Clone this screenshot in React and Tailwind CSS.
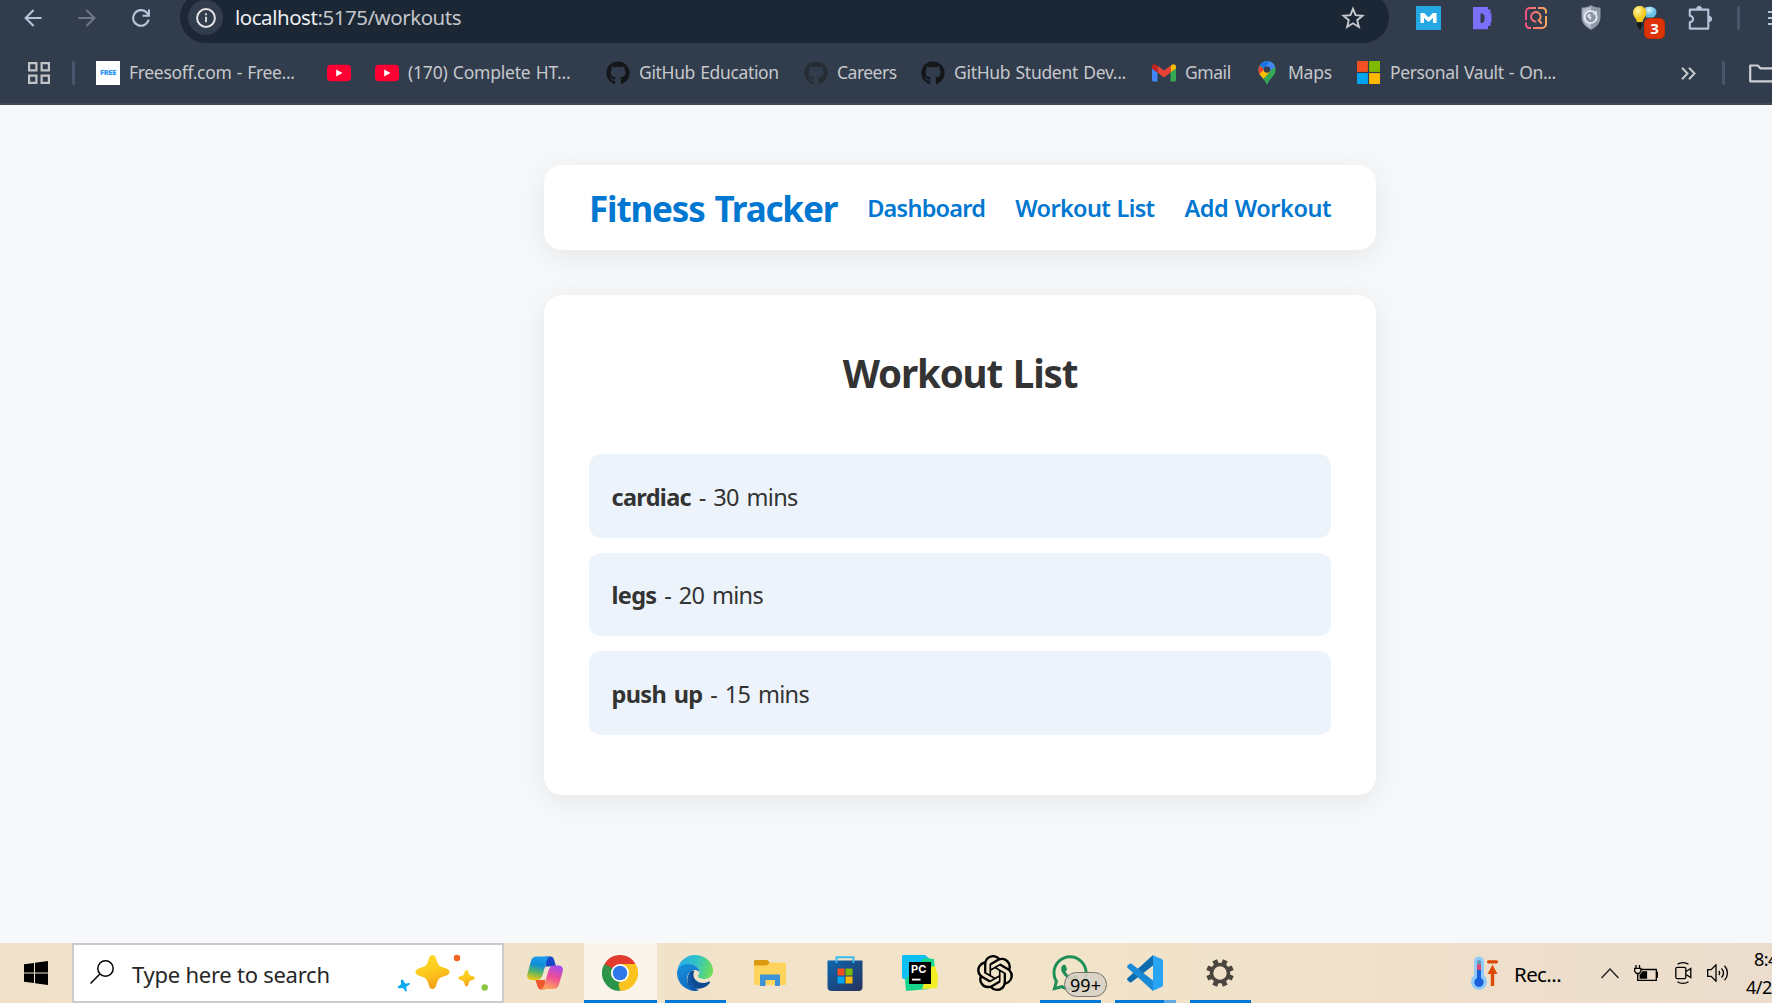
import { FaGithub, FaWhatsapp } from "react-icons/fa";
import { SiOpenai } from "react-icons/si";

/* ---------- browser toolbar icons ---------- */

const Arrow = ({ className }) => (
  <svg viewBox="0 0 18 18" className={`h-[18px] w-[18px] shrink-0 ${className}`} fill="none" stroke="currentColor" strokeWidth="2">
    <path d="M17.5 9H1.8M9.6 1 1.6 9l8 8" />
  </svg>
);

const Reload = () => (
  <svg viewBox="0 0 18 18" className="ml-9 h-[18px] w-[18px] shrink-0 text-[#b9c4da]" fill="none" stroke="currentColor" strokeWidth="2.1">
    <path d="M16.6 10.6A7.8 7.8 0 1 1 14.9 3.9l1.4 1.7" />
    <path d="M16.9.4v6.4h-6.3" />
  </svg>
);

const Info = () => (
  <svg viewBox="0 0 20 20" className="h-5 w-5" fill="none" stroke="#e3e3e3" strokeWidth="2">
    <circle cx="10" cy="10" r="8.9" />
    <path d="M10 8.8v5.4" strokeWidth="1.8" />
    <path d="M10 5.2v2" strokeWidth="1.8" />
  </svg>
);

const Star = () => (
  <svg viewBox="0 0 24 24" className="h-6 w-6" fill="none" stroke="#c7c9cd" strokeWidth="1.9">
    <path d="m12 2.8 2.6 6.4 6.9.5-5.3 4.5 1.7 6.8-5.9-3.7-5.9 3.7 1.7-6.8L2.5 9.7l6.9-.5z" />
  </svg>
);

const MExt = () => (
  <svg viewBox="0 0 24 24" className="ml-[27px] h-6 w-[25px] shrink-0" preserveAspectRatio="none">
    <path d="M0 0h24v24H0z" fill="#25a7e4" />
    <path d="M4.3 17V7h3.500l4.200 4.600L16.200 7h3.500v10h-3.400v-5L12 16l-4.300-4v5z" fill="#fff" />
  </svg>
);

const DExt = () => (
  <svg viewBox="0 0 19 24" className="ml-[32px] h-6 w-[19px] shrink-0" fillRule="evenodd">
    <path d="M0 1h15v2.500h2.500v4h1v9h-1V20H15v3.200H0zM7.500 7.500v9.500h2l2-2.500V9.500l-2-2z" fill="#7a70fb" />
  </svg>
);

const SearchExt = () => (
  <svg viewBox="0 0 24 24" className="ml-[32px] h-6 w-6 shrink-0" fill="none" stroke="url(#igx)" strokeWidth="1.9">
    <defs>
      <linearGradient id="igx" gradientUnits="userSpaceOnUse" x1="1" y1="12" x2="23" y2="12">
        <stop stopColor="#fb4d80" />
        <stop offset="1" stopColor="#fdb05a" />
      </linearGradient>
    </defs>
    <path d="M12 2H6a4 4 0 0 0-4 4v7.500M14 2h4.500A3.500 3.500 0 0 1 22 5.500v2M22 10.500V18a4 4 0 0 1-4 4H9M7 22H5.500A3.500 3.500 0 0 1 2 18.500v-2M1 13h2M21 11h2" />
    <path d="M14.800 14.600a4.800 4.800 0 1 0-2.500 1M14 13.500l3.700 4" />
  </svg>
);

const ShieldExt = () => (
  <svg viewBox="0 0 20 25" className="ml-[33px] h-[25px] w-5 shrink-0">
    <path d="M10 0C7.500 2 4 2.600.5 2.600V12c0 6 4 10 9.500 13 5.500-3 9.500-7 9.500-13V2.600C16 2.600 12.500 2 10 0z" fill="#8d98a8" />
    <path d="M10 1.500C7.500 3 5 3.600 1.800 3.700V12c0 5 3.400 8.800 8.200 11.500z" fill="#b8bfca" />
    <circle cx="9.700" cy="12" r="6" fill="#8993a5" stroke="#eceff4" strokeWidth="1.7" />
    <path d="M6 11c1-2.500 3-2.500 4-1.500l-1 1.500 1.500 1.500-1 2c-1.500 0-1.500-2-3.500-3.500z" fill="#dfe4ec" />
    <circle cx="14.200" cy="8" r="2" fill="#dde2ea" />
  </svg>
);

const BulbExt = () => (
  <div className="relative ml-[32px] h-6 w-6 shrink-0">
    <svg viewBox="0 0 24 24" className="h-6 w-6">
      <defs>
        <radialGradient id="bulb" cx="35%" cy="30%">
          <stop stopColor="#fff6a8" />
          <stop offset="1" stopColor="#f3c91b" />
        </radialGradient>
        <radialGradient id="bulb2" cx="35%" cy="30%">
          <stop stopColor="#d9f6ff" />
          <stop offset="1" stopColor="#66bfe2" />
        </radialGradient>
      </defs>
      <path d="M12 1.500C17-.5 23.500 1 23.500 6c0 3-2 4.500-3.500 5.500h-7z" fill="url(#bulb2)" />
      <path d="M0 6.500a6.700 6.700 0 0 1 13.400 0c0 4-3.400 6-3.900 9.500H4C3.500 12.500 0 10.500 0 6.500z" fill="url(#bulb)" />
      <path d="M4 16.500h5.500v4l-1.500.5v2.500H5.500V21L4 20.500z" fill="#17191c" />
    </svg>
    <span className="absolute left-[11px] top-[12px] flex h-[21px] w-[21px] items-center justify-center rounded-[5px] border border-[#c42c03] bg-[#dc3205] text-[15px] font-bold leading-none text-white">3</span>
  </div>
);

const Puzzle = () => (
  <svg viewBox="0 0 25 25" className="ml-[31px] h-[25px] w-[25px] shrink-0" fill="none" stroke="#b6c2d8" strokeWidth="2.1" strokeLinejoin="round">
    <path d="M1.800 4.600h18.500v19H1.800v-6.200c4.400-.9 4.400-5.700 0-6.600z" />
    <path d="M8.600 4.200a2.500 3 0 0 1 5 0zM20.700 11.300a3 2.700 0 0 1 0 5.400z" fill="#b6c2d8" strokeWidth="1" />
  </svg>
);

/* ---------- bookmark icons ---------- */

const AppsGrid = () => (
  <svg viewBox="0 0 22 22" className="h-[22px] w-[22px] shrink-0" fill="none" stroke="#c3c4c6" strokeWidth="2.2">
    <path d="M1.100 1.100h7.300v7.300H1.100zM13.600 1.100h7.300v7.300h-7.300zM1.100 13.600h7.300v7.300H1.100zM13.600 13.600h7.300v7.300h-7.300z" />
  </svg>
);

const FreeIcon = () => (
  <span className="flex h-6 w-6 shrink-0 items-center justify-center bg-white text-[7.5px] font-black leading-none tracking-[-0.3px] text-[#2a96f5]">FREE</span>
);

const YouTube = () => (
  <svg viewBox="0 0 24 24" className="h-6 w-6 shrink-0">
    <rect y="3.700" width="24" height="16.600" rx="4" fill="#ff0033" />
    <path d="M9.200 8.600v6.800l6.300-3.400z" fill="#fff" />
  </svg>
);

const Gmail = () => (
  <svg viewBox="0 0 24 18" className="h-[18px] w-6 shrink-0">
    <path d="M1.600 17.500h3.900V8.600L0 4.400v11.500a1.600 1.600 0 0 0 1.600 1.600z" fill="#4285f4" />
    <path d="M18.500 17.500h3.900a1.600 1.600 0 0 0 1.600-1.600V4.400l-5.500 4.200z" fill="#34a853" />
    <path d="M18.500 1.700v6.900L24 4.400V2.700c0-2.200-2.300-3.300-4-2z" fill="#fbbc04" />
    <path d="M5.500 8.600V1.700L12 6.600l6.500-4.900v6.900L12 13.500z" fill="#ea4335" />
    <path d="M0 2.700v1.700l5.500 4.200V1.700L4 .7c-1.700-1.300-4-.2-4 2z" fill="#c5221f" />
  </svg>
);

const Maps = () => (
  <svg viewBox="0 0 18 24" className="h-6 w-[18px] shrink-0">
    <defs>
      <clipPath id="pin">
        <path d="M9 0a8.600 8.600 0 0 0-8.600 8.700c0 2.500 1 4.300 2.500 6.200C5.500 17.800 7 19.500 9 24c2-4.500 3.500-6.200 6.100-9.100 1.500-1.900 2.500-3.700 2.500-6.200A8.600 8.600 0 0 0 9 0z" />
      </clipPath>
    </defs>
    <g clipPath="url(#pin)">
      <path d="M0 0h18v24H0z" fill="#34a853" />
      <path d="M0 3.500 7 9l-5 6-3-4z" fill="#ea4335" />
      <path d="M0 2.500 6.500 8 12 0H0z" fill="#1a73e8" />
      <path d="M12 0 5 9l5 3 8-7V0z" fill="#4285f4" />
      <path d="M7 8 0 14l4.500 5L12.500 10z" fill="#fbbc04" />
    </g>
    <circle cx="9" cy="8.600" r="3.200" fill="#313c4d" />
  </svg>
);

const Microsoft = () => (
  <svg viewBox="0 0 23 23" className="mb-px h-[23px] w-[23px] shrink-0">
    <path d="M0 0h10.900v10.900H0z" fill="#f65022" />
    <path d="M12.100 0H23v10.900H12.100z" fill="#7fba00" />
    <path d="M0 12.100h10.900V23H0z" fill="#02a4ef" />
    <path d="M12.100 12.100H23V23H12.100z" fill="#ffb901" />
  </svg>
);

const Sep = ({ className }) => <span className={`h-6 w-[3px] shrink-0 rounded-full bg-[#4a566b] ${className}`} />;

const Bookmark = ({ icon, label, className }) => (
  <div className={`flex h-full shrink-0 items-center gap-[9px] ${className}`}>
    {icon}
    {label && <span className="whitespace-nowrap pb-0.5 text-[17.5px] leading-6 [word-spacing:1px]">{label}</span>}
  </div>
);

function Browser() {
  return (
    <header className="flex h-[105px] shrink-0 flex-col overflow-hidden border-b-2 border-[#45464f] bg-[#313c4d]">
      <div className="flex h-[35px] shrink-0 items-center pl-6">
        <Arrow className="text-[#b9c4da]" />
        <Arrow className="ml-9 rotate-180 text-[#6e7888]" />
        <Reload />
        <div className="ml-[30px] flex h-[51px] w-[1209px] shrink-0 items-center rounded-full bg-[#1c2736] pl-2 pr-6">
          <span className="flex h-[35px] w-[35px] shrink-0 items-center justify-center rounded-full bg-[#313c4d]">
            <Info />
          </span>
          <span className="ml-[12px] flex-1 text-[20.5px] tracking-[-0.47px] text-[#c3c6ca]">
            <span className="text-[#eceef0]">localhost</span>:5175/workouts
          </span>
          <Star />
        </div>
        <MExt />
        <DExt />
        <SearchExt />
        <ShieldExt />
        <BulbExt />
        <Puzzle />
        <Sep className="ml-[24px]" />
        <svg viewBox="0 0 20 16" className="ml-[28px] h-4 w-5 shrink-0" stroke="#b6c2d8" strokeWidth="2">
          <path d="M0 2h20M0 8h20M0 14h20" />
        </svg>
      </div>
      <div className="mt-2 flex h-[60px] shrink-0 items-center pl-7 text-[#c6c8cb]">
        <AppsGrid />
        <Sep className="ml-[22px]" />
        <Bookmark icon={<FreeIcon />} label="Freesoff.com - Free..." className="ml-[21px] w-[231px] tracking-[-0.33px]" />
        <Bookmark icon={<YouTube />} className="w-[48px]" />
        <Bookmark icon={<YouTube />} label="(170) Complete HT..." className="w-[231px] tracking-[-0.21px]" />
        <Bookmark icon={<FaGithub className="h-6 w-6 shrink-0 text-[#151619]" />} label="GitHub Education" className="w-[198px] tracking-[-0.35px]" />
        <Bookmark icon={<FaGithub className="h-6 w-6 shrink-0 text-[#262d34]" />} label="Careers" className="w-[117px] tracking-[-0.5px]" />
        <Bookmark icon={<FaGithub className="h-6 w-6 shrink-0 text-[#151619]" />} label="GitHub Student Dev..." className="w-[231px] tracking-[-0.3px]" />
        <Bookmark icon={<Gmail />} label="Gmail" className="w-[106px] tracking-[-0.45px]" />
        <Bookmark icon={<Maps />} label="Maps" className="w-[99px] gap-[12px] tracking-[-0.25px]" />
        <Bookmark icon={<Microsoft />} label="Personal Vault - On..." className="w-[324px] gap-[10px] tracking-[-0.38px]" />
        <svg viewBox="0 0 15 13" className="h-[13px] w-[15px] shrink-0" fill="none" stroke="#c6c8cb" strokeWidth="2">
          <path d="m1 .8 5.500 5.700L1 12.200M8 .8l5.500 5.700L8 12.200" />
        </svg>
        <Sep className="ml-[26px]" />
        <svg viewBox="0 0 26 19" className="ml-[24px] h-[19px] w-[26px] shrink-0" fill="none" stroke="#d0d1d3" strokeWidth="2.2" strokeLinejoin="round">
          <path d="M1.200 1.500h7.500l2.600 2.800h13.500v13H1.200z" />
        </svg>
      </div>
    </header>
  );
}

/* ---------- page ---------- */

const workouts = [
  { name: "cardiac", minutes: 30 },
  { name: "legs", minutes: 20 },
  { name: "push up", minutes: 15 },
];

function Page() {
  return (
    <main className="h-[838px] shrink-0 bg-[#f7f8fa] pl-[544px] pt-[60px]">
      <nav className="flex h-[85px] w-[832px] items-center justify-between rounded-[18px] bg-white px-[45px] text-[#0077d0] shadow-[0_6px_30px_rgba(0,0,0,0.08)]">
        <h1 className="pt-1 text-[35px] font-bold tracking-[-1.15px] [word-spacing:2px]">Fitness Tracker</h1>
        <div className="flex gap-[30px] pt-0.5 text-[23.5px] font-semibold [word-spacing:1px]">
          <a className="tracking-[-0.75px]">Dashboard</a>
          <a className="tracking-[-0.67px]">Workout List</a>
          <a className="tracking-[-0.48px]">Add Workout</a>
        </div>
      </nav>
      <section className="mt-[45px] h-[500px] w-[832px] rounded-[18px] bg-white px-[45px] pt-[45px] text-[#333] shadow-[0_6px_30px_rgba(0,0,0,0.08)]">
        <h2 className="h-[114px] pt-[3px] text-center text-[38.5px] font-bold leading-[60px] tracking-[-1.15px] [word-spacing:2px]">Workout List</h2>
        <ul className="flex flex-col gap-[15px] text-[23.5px]">
          {workouts.map((w) => (
            <li key={w.name} className="flex h-[83.5px] items-center rounded-[12px] bg-[#ecf3fb] px-[22.5px] pt-[3.5px]">
              <p className="tracking-[-0.7px] [word-spacing:2.3px]">
                <strong className="tracking-[-0.68px]">{w.name}</strong> - {w.minutes} mins
              </p>
            </li>
          ))}
        </ul>
      </section>
    </main>
  );
}

/* ---------- taskbar ---------- */

const Sparkles = () => (
  <svg viewBox="0 0 92 38" className="h-[38px] w-[92px] shrink-0">
    <defs>
      <linearGradient id="gold" x1="0" y1="0" x2="0.3" y2="1">
        <stop stopColor="#ffdc2e" />
        <stop offset="0.6" stopColor="#fdc71c" />
        <stop offset="1" stopColor="#f3a217" />
      </linearGradient>
    </defs>
    <path d="M35.500 1c3 0 3.500 3 4.500 6.500 1.500 4 3 5 6.500 6 3.500 1 6 2 6 4.500s-2.500 3.500-6 4.500c-3.500 1-5 2-6.500 6-1 3.500-1.500 6.500-4.500 6.500s-3.500-3-4.500-6.500c-1.500-4-3-5-6.500-6-3.500-1-6-2-6-4.500s2.500-3.500 6-4.500c3.500-1 5-2 6.500-6C32 4 32.500 1 35.500 1z" fill="url(#gold)" />
    <path d="M69.500 16c1.500 0 1.700 1.500 2.200 3.200.7 2 1.500 2.400 3.200 2.900 1.600.5 2.900.9 2.900 2s-1.300 1.600-2.900 2c-1.700.5-2.500 1-3.200 3-.5 1.700-.7 3.200-2.200 3.200s-1.700-1.500-2.200-3.200c-.7-2-1.500-2.500-3.200-3-1.600-.4-2.900-.9-2.900-2s1.300-1.500 2.900-2c1.700-.5 2.500-.9 3.200-2.900.5-1.700.7-3.200 2.200-3.200z" fill="url(#gold)" />
    <path d="M5 25.500c1.800 0 2 3.500 3.600 4 1.600.4 4-1.500 4.300.1.300 1.500-3 2-3.500 3.600-.5 1.500 1.500 4-.2 4.300-1.600.2-2-3-3.500-3.500-1.500-.5-4.500 1-4.900-.5C.4 31.800 3.500 31.500 4 30c.4-1.500-.8-4.500 1-4.500z" fill="#0cabf0" />
    <circle cx="60" cy="4" r="3.200" fill="#f26522" />
    <circle cx="87.700" cy="33.500" r="3.200" fill="#8cc63f" />
  </svg>
);

const Copilot = () => (
  <svg viewBox="0 0 36 36" className="h-9 w-9">
    <defs>
      <linearGradient id="cpa" x1="0.5" y1="0" x2="0.3" y2="1">
        <stop stopColor="#1d9cf0" />
        <stop offset="0.35" stopColor="#0f8ed6" />
        <stop offset="0.65" stopColor="#57b36a" />
        <stop offset="1" stopColor="#f0c80f" />
      </linearGradient>
      <linearGradient id="cpb" x1="0.7" y1="0" x2="0.4" y2="1">
        <stop stopColor="#a64bf0" />
        <stop offset="0.5" stopColor="#ee4f93" />
        <stop offset="1" stopColor="#fba45c" />
      </linearGradient>
    </defs>
    <path d="M18 1.500h5.500c2.500 0 3.200 2 4 4.500l1.500 5.500h-5c-3 0-4 2-5 5z" fill="#1746c8" />
    <path d="M18 34.500h-4c-2.500 0-3.200-2-4-4.500L8.500 25H13c2.500 0 4-2 5-5z" fill="#f0592e" />
    <path d="M9.500 1.500H23c-2 .5-2.800 2.500-3.500 5L15.500 20c-1 3-3 5-6 5H4.500C.5 25-.5 22 .5 18.500L4 6c.8-3 2.500-4.500 5.500-4.500z" fill="url(#cpa)" />
    <path d="M26.500 34H14c2-.5 2.800-2.500 3.500-5l4-13.500c1-3 2.500-5 5.500-5h4.500c4 0 5 3 4 6.500L32 29.500c-.8 3-2.500 4.500-5.500 4.500z" fill="url(#cpb)" />
    <path d="M20 11.500h3.500c-1.500 1-2.300 2.500-2.800 4.200l-2.500 8.300c-.3.800-.8 1-1.500 1h-3.200c1.500-1 2.200-2.500 2.700-4.200l2.500-8.300c.2-.7.6-1 1.300-1z" fill="#f3e6cf" />
  </svg>
);

const Chrome = () => (
  <svg viewBox="0 0 48 48" className="h-9 w-9">
    <path d="M3.200 12A24 24 0 0 1 44.800 12H24z" fill="#e33b2e" />
    <path d="M44.800 12A24 24 0 0 1 24 48l10.400-18L24 12z" fill="#fcc31e" />
    <path d="M24 48A24 24 0 0 1 3.200 12l10.400 18L24 36l7-1z" fill="#2a9549" />
    <path d="m3.200 12 10.400 18L24 12z" fill="#e33b2e" />
    <path d="M3.200 12 13.600 30l5-10z" fill="#2a9549" />
    <path d="M34.400 30 24 48l-2-10z" fill="#fcc31e" />
    <circle cx="24" cy="24" r="12" fill="#fff" />
    <circle cx="24" cy="24" r="9.700" fill="#3178ea" />
  </svg>
);

const Edge = () => (
  <svg viewBox="0 0 36 36" className="h-9 w-9">
    <defs>
      <linearGradient id="ega" x1="0" y1="0.3" x2="1" y2="0.5">
        <stop stopColor="#2aa9e8" />
        <stop offset="0.5" stopColor="#2fc3c9" />
        <stop offset="1" stopColor="#6fde57" />
      </linearGradient>
      <linearGradient id="egb" x1="0" y1="0" x2="0.3" y2="1">
        <stop stopColor="#1890dc" />
        <stop offset="1" stopColor="#0f6cc2" />
      </linearGradient>
    </defs>
    <path d="M.5 15A17.700 17.700 0 0 1 18 0c10.500 0 18 7.500 18 15.500 0 5.500-4 8.500-8.500 8.500-4 0-6.500-1.500-6.500-3 0-1 1.500-1.500 1.500-4.500 0-4-4-7-9-7C7.500 9.500 2.500 12 .5 15z" fill="url(#ega)" />
    <path d="M0 18c0-5.500 5-9 11-9 6.500 0 11.500 3.500 11.500 8-6-5-12.500 0-12.500 7 0 5 3.500 10 10 11.800A18 18 0 0 1 0 18z" fill="url(#egb)" />
    <path d="M14.500 15.500C10 20 10.500 28 16 32c5 3.500 12.500 1.500 16.800-4 .8-1-.3-1.800-1.300-1.300-7 3.300-14.500-.7-15-6-.2-2 .2-3.700 1-5z" fill="#0d4b93" />
    <path d="M16.500 35.800C9 32 8.500 21 14 16c-1 9 2 17 8 19.300-1.800.6-3.700.8-5.500.5z" fill="#1159a6" />
  </svg>
);

const Folder = () => (
  <svg viewBox="0 0 32 28" className="h-7 w-8">
    <path d="M0 2.500C0 1.500.6 1 1.500 1h11c1 0 1.500.5 2 1.200L16 4l-2 3H0z" fill="#dc9a10" />
    <path d="M0 6.500h13L16 3.500h14.500c1 0 1.500.6 1.500 1.500v19.500c0 1-.5 1.500-1.500 1.500h-29C.5 26 0 25.500 0 24.500z" fill="#ffd35c" />
    <path d="M7 15.500h18c.6 0 1 .4 1 1v10.500h-5v-6h-9.500v6H6V16.500c0-.6.4-1 1-1z" fill="#3c93d8" />
  </svg>
);

const Store = () => (
  <svg viewBox="0 0 36 36" className="h-9 w-9">
    <defs>
      <linearGradient id="st" x1="0" y1="0" x2="1" y2="1">
        <stop stopColor="#0d66b0" />
        <stop offset="1" stopColor="#26325c" />
      </linearGradient>
    </defs>
    <path d="M.5 5.500h35V32c0 2.500-1.500 4-4 4h-27c-2.500 0-4-1.500-4-4z" fill="url(#st)" />
    <path d="M9.500 8V2.300h17V8" fill="none" stroke="#39b9ee" strokeWidth="1.9" />
    <path d="M10.500 13.500h7v7h-7z" fill="#f65022" />
    <path d="M18.500 13.500h7v7h-7z" fill="#7fba00" />
    <path d="M10.500 21.500h7v7h-7z" fill="#02a4ef" />
    <path d="M18.500 21.500h7v7h-7z" fill="#ffb901" />
  </svg>
);

const PyCharm = () => (
  <div className="relative h-9 w-9">
    <svg viewBox="0 0 36 36" className="h-9 w-9">
      <path d="M1 0h22l5 4-4 20H7L4 25l-4-2V1z" fill="#0cc0f5" />
      <path d="m22 3 10 1 1 10-6 20-23 2-1-11z" fill="#17d68b" />
      <path d="m33 11 3 10-1 12-15 1 8-22z" fill="#f3ee22" />
      <path d="M7 7h22v22H7z" fill="#000" />
      <path d="M10 24.600h8.500" stroke="#fff" strokeWidth="1.8" />
    </svg>
    <span className="absolute left-[9px] top-[9px] font-['Inter'] text-[11px] font-bold leading-[11px] text-white">PC</span>
  </div>
);

const VSCode = () => (
  <svg viewBox="0 0 36 36" className="h-9 w-9">
    <path d="M26 0v10.500L4.500 27.300c-.6.4-1.300.4-1.800 0L.7 25.500c-.8-.7-.8-1.700 0-2.400z" fill="#0e6cb0" />
    <path d="M26 36V25.500L4.500 8.700c-.6-.4-1.300-.4-1.800 0L.7 10.500c-.8.7-.8 1.700 0 2.400z" fill="#1a8ad6" />
    <path d="M26 .2 34.500 4c1 .5 1.500 1.200 1.500 2.300v23.400c0 1.100-.5 1.800-1.500 2.300L26 35.800z" fill="#27a5f2" />
  </svg>
);

const Gear = () => (
  <svg viewBox="-14 -14 28 28" className="h-7 w-7" fill="none" stroke="#4b4540">
    <circle r="8.500" strokeWidth="3.6" />
    <path
      strokeWidth="5"
      d="M0-13.800V-9M0 13.800V9M-13.800 0H-9M13.800 0H9M-9.700-9.700l3.400 3.400M9.700 9.700 6.300 6.300M-9.700 9.700l3.400-3.400M9.700-9.700 6.300-6.300"
      transform="rotate(22.5)"
    />
  </svg>
);

const WhatsApp = () => (
  <div className="relative h-9 w-9">
    <FaWhatsapp className="h-9 w-9 scale-[1.12] text-[#1f8f58]" />
    <span className="absolute left-[12px] top-[17px] flex h-[25px] w-[43px] items-center justify-center rounded-full border border-[#77716a] bg-[#d8d2c5]/90 text-[18px] leading-none text-black">99+</span>
  </div>
);

const tasks = [
  { id: "copilot", icon: <Copilot />, bar: "bg-transparent", tile: "" },
  { id: "chrome", icon: <Chrome />, bar: "w-[73px] bg-[#0078d7]", tile: "bg-[#faf4ea]" },
  { id: "edge", icon: <Edge />, bar: "w-[61px] bg-[#0078d7]", tile: "" },
  { id: "files", icon: <Folder />, bar: "bg-transparent", tile: "" },
  { id: "store", icon: <Store />, bar: "bg-transparent", tile: "" },
  { id: "pycharm", icon: <PyCharm />, bar: "bg-transparent", tile: "" },
  { id: "chatgpt", icon: <SiOpenai className="h-9 w-9 text-black" />, bar: "bg-transparent", tile: "" },
  { id: "whatsapp", icon: <WhatsApp />, bar: "w-[61px] bg-[#0078d7]", tile: "" },
  { id: "vscode", icon: <VSCode />, bar: "w-[61px] border-r-[12px] border-[#62a8e2] bg-[#0078d7]", tile: "" },
  { id: "settings", icon: <Gear />, bar: "w-[61px] bg-[#0078d7]", tile: "" },
];

function Taskbar() {
  return (
    <footer className="flex h-[60px] shrink-0 items-center overflow-hidden bg-linear-to-r from-[#f0e1cb] via-[#f2e4c9] via-60% to-[#ebdccd] text-black">
      <div className="flex w-[72px] shrink-0 justify-center">
        <svg viewBox="0 0 24 24" className="h-6 w-6">
          <path d="M0 3.300 10 2v9.500H0zM11 1.800 24 0v11.500H11zM0 12.500h10V22L0 20.700zM11 12.500h13V24l-13-1.800z" />
        </svg>
      </div>
      <div className="flex h-full w-[432px] shrink-0 items-center border-2 border-[#cbcbcd] bg-white pl-4 pr-[13px]">
        <svg viewBox="0 0 24 24" className="mb-0.5 h-6 w-6 shrink-0" fill="none" stroke="#000" strokeWidth="1.5">
          <circle cx="15.500" cy="8.500" r="7.700" />
          <path d="M9.900 14 .5 23.500" />
        </svg>
        <span className="ml-[18px] flex-1 whitespace-nowrap pt-0.5 text-[22px] tracking-[-0.25px] text-[#262626]">Type here to search</span>
        <Sparkles />
      </div>
      <div className="ml-[4px] flex h-full shrink-0 gap-px">
        {tasks.map((t) => (
          <div key={t.id} className="flex h-full w-[74px] flex-col items-center">
            <div className={`flex h-[57px] w-[73px] items-center justify-center pt-[3px] ${t.tile}`}>{t.icon}</div>
            <div className={`h-[3px] ${t.bar}`} />
          </div>
        ))}
      </div>
      <svg viewBox="0 0 28 34" className="ml-[214px] h-[34px] w-7 shrink-0">
        <path d="M8 .5a5 5 0 0 1 5 5v14a8 8 0 1 1-10 0v-14a5 5 0 0 1 5-5z" fill="#8fcbfb" />
        <path d="M6 6a2 2 0 0 1 4 0v3H6z" fill="#6498b8" />
        <path d="M6 8.500h4V16H6z" fill="#e0456c" />
        <path d="M6 14h4v8a4.700 4.700 0 1 1-4 0z" fill="#1a62dc" />
        <path d="M17.500 5.800h8" stroke="#dc4a05" strokeWidth="3.2" strokeLinecap="round" />
        <path d="m16.500 18 5-9.300 5 9.300h-3.300v12h-3.400V18z" fill="#dc4a05" />
      </svg>
      <span className="ml-[15px] w-[87px] shrink-0 pt-0.5 text-[20.5px] tracking-[-0.6px]">Rec...</span>
      <svg viewBox="0 0 18 11" className="h-[11px] w-[18px] shrink-0" fill="none" stroke="#222" strokeWidth="1.4">
        <path d="m.5 10 8.500-9 8.500 9" />
      </svg>
      <svg viewBox="0 0 24 17" className="ml-[15px] h-[17px] w-6 shrink-0" fill="none" stroke="#000" strokeWidth="1.3">
        <path d="M7 4.500h15.300v10.800H3.700V10M22.500 7.500h1v4.500h-1" />
        <path d="M8.500 6.200h4.600v7.500H5.600v-4z" fill="#000" stroke="none" />
        <path d="M2 0v3M5.500 0v3M.6 3.300h6.300v3L5 8.500H2.500L.6 6.300zM3.700 8.500v3" />
      </svg>
      <svg viewBox="0 0 17 22" className="ml-[17px] h-[22px] w-[17px] shrink-0" fill="none" stroke="#000" strokeWidth="1.3">
        <rect x=".8" y="5.300" width="10" height="11.400" rx="1.5" />
        <path d="m11 9.500 4.800-3v9L11 12.500M2.500 2.300c3-2.200 8-2.200 11 0M2.500 19.700c3 2.200 8 2.200 11 0" />
      </svg>
      <svg viewBox="0 0 22 18" className="ml-[15px] h-[18px] w-[22px] shrink-0" fill="none" stroke="#000" strokeWidth="1.3">
        <path d="M.7 5.700h3.500L9 .8v16.400l-4.800-4.900H.7zM11.800 7c1 1.200 1 2.800 0 4M14.500 4.300c2.400 2.800 2.400 6.600 0 9.400M17.500 1.700c4 4.300 4 10.300 0 14.600" />
      </svg>
      <div className="ml-[17px] flex shrink-0 flex-col whitespace-nowrap text-[18px] leading-[28px] tracking-[-0.5px]">
        <span className="pl-[8px]">8:4</span>
        <span>4/2</span>
      </div>
    </footer>
  );
}

export default function App() {
  return (
    <div className="flex h-[1003px] w-[1772px] flex-col overflow-hidden font-['Noto_Sans',sans-serif]">
      <Browser />
      <Page />
      <Taskbar />
    </div>
  );
}
